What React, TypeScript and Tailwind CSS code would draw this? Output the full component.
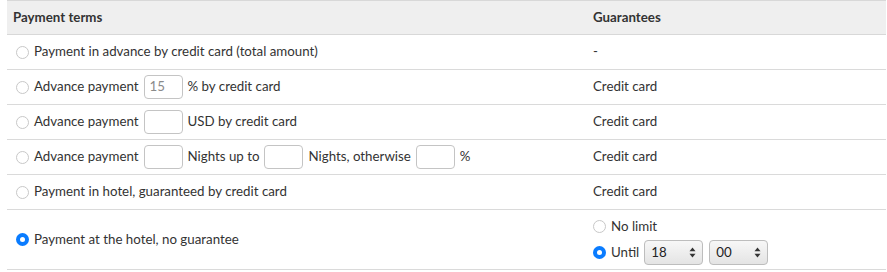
import { ReactNode } from 'react'

function Radio({ checked = false }: { checked?: boolean }) {
  return checked ? (
    <span className="inline-flex h-[13px] w-[13px] shrink-0 items-center justify-center rounded-full bg-[#0a7cff]">
      <span className="h-[5px] w-[5px] rounded-full bg-white" />
    </span>
  ) : (
    <span className="inline-block h-[13px] w-[13px] shrink-0 rounded-full border border-[#c8c8c8] bg-white" />
  )
}

function Box({ value = '' }: { value?: string }) {
  return (
    <span className="inline-flex h-[24px] w-[39px] items-center rounded-[4px] border border-[#c4c4c4] bg-white px-[5px] text-[#8a8a8a]">
      {value}
    </span>
  )
}

function Select({ value }: { value: string }) {
  return (
    <span className="inline-flex h-[25px] w-[59px] items-center justify-between rounded-[4px] border border-[#bdbdbd] bg-gradient-to-b from-[#f7f7f7] to-[#e4e4e4] pl-[6px] pr-[6px] text-[#222]">
      {value}
      <svg width="7" height="11" viewBox="0 0 7 11">
        <path d="M3.5 0.5 L6.5 4.2 L0.5 4.2 Z" fill="#333" />
        <path d="M3.5 10.5 L6.5 6.8 L0.5 6.8 Z" fill="#333" />
      </svg>
    </span>
  )
}

function Row({ left, right, checked = false, tall = false }: { left: ReactNode; right: ReactNode; checked?: boolean; tall?: boolean }) {
  return (
    <tr className="border-b border-[#dadada]">
      <td className={`pl-[9px] ${tall ? 'h-[60px]' : 'h-[35px]'}`}>
        <div className="flex items-center gap-[5px]">
          <Radio checked={checked} />
          <div className="flex items-center gap-[5px]">{left}</div>
        </div>
      </td>
      <td className="pl-[6px]">{right}</td>
    </tr>
  )
}

export default function App() {
  return (
    <div className="bg-white pl-[7px] pr-[1px] text-[13.3px] text-[#333]" style={{ fontFamily: 'Lato, "Noto Sans", sans-serif' }}>
      <table className="w-full border-collapse">
        <thead>
          <tr className="border-y border-[#d8d8d8] bg-[#efefef]">
            <th className="h-[34px] w-[580px] pl-[6px] text-left font-bold">Payment terms</th>
            <th className="pl-[6px] text-left font-bold">Guarantees</th>
          </tr>
        </thead>
        <tbody>
          <Row left={<span>Payment in advance by credit card (total amount)</span>} right="-" />
          <Row
            left={
              <>
                <span>Advance payment</span>
                <Box value="15" />
                <span>% by credit card</span>
              </>
            }
            right="Credit card"
          />
          <Row
            left={
              <>
                <span>Advance payment</span>
                <Box />
                <span>USD by credit card</span>
              </>
            }
            right="Credit card"
          />
          <Row
            left={
              <>
                <span>Advance payment</span>
                <Box />
                <span>Nights up to</span>
                <Box />
                <span>Nights, otherwise</span>
                <Box />
                <span>%</span>
              </>
            }
            right="Credit card"
          />
          <Row left={<span>Payment in hotel, guaranteed by credit card</span>} right="Credit card" />
          <Row
            tall
            checked
            left={<span>Payment at the hotel, no guarantee</span>}
            right={
              <div className="flex flex-col gap-[4px] pt-[3px]">
                <div className="flex items-center gap-[5px]">
                  <Radio />
                  <span>No limit</span>
                </div>
                <div className="flex items-center gap-[5px]">
                  <Radio checked />
                  <span>Until</span>
                  <span className="flex gap-[6px]">
                    <Select value="18" />
                    <Select value="00" />
                  </span>
                </div>
              </div>
            }
          />
        </tbody>
      </table>
    </div>
  )
}
